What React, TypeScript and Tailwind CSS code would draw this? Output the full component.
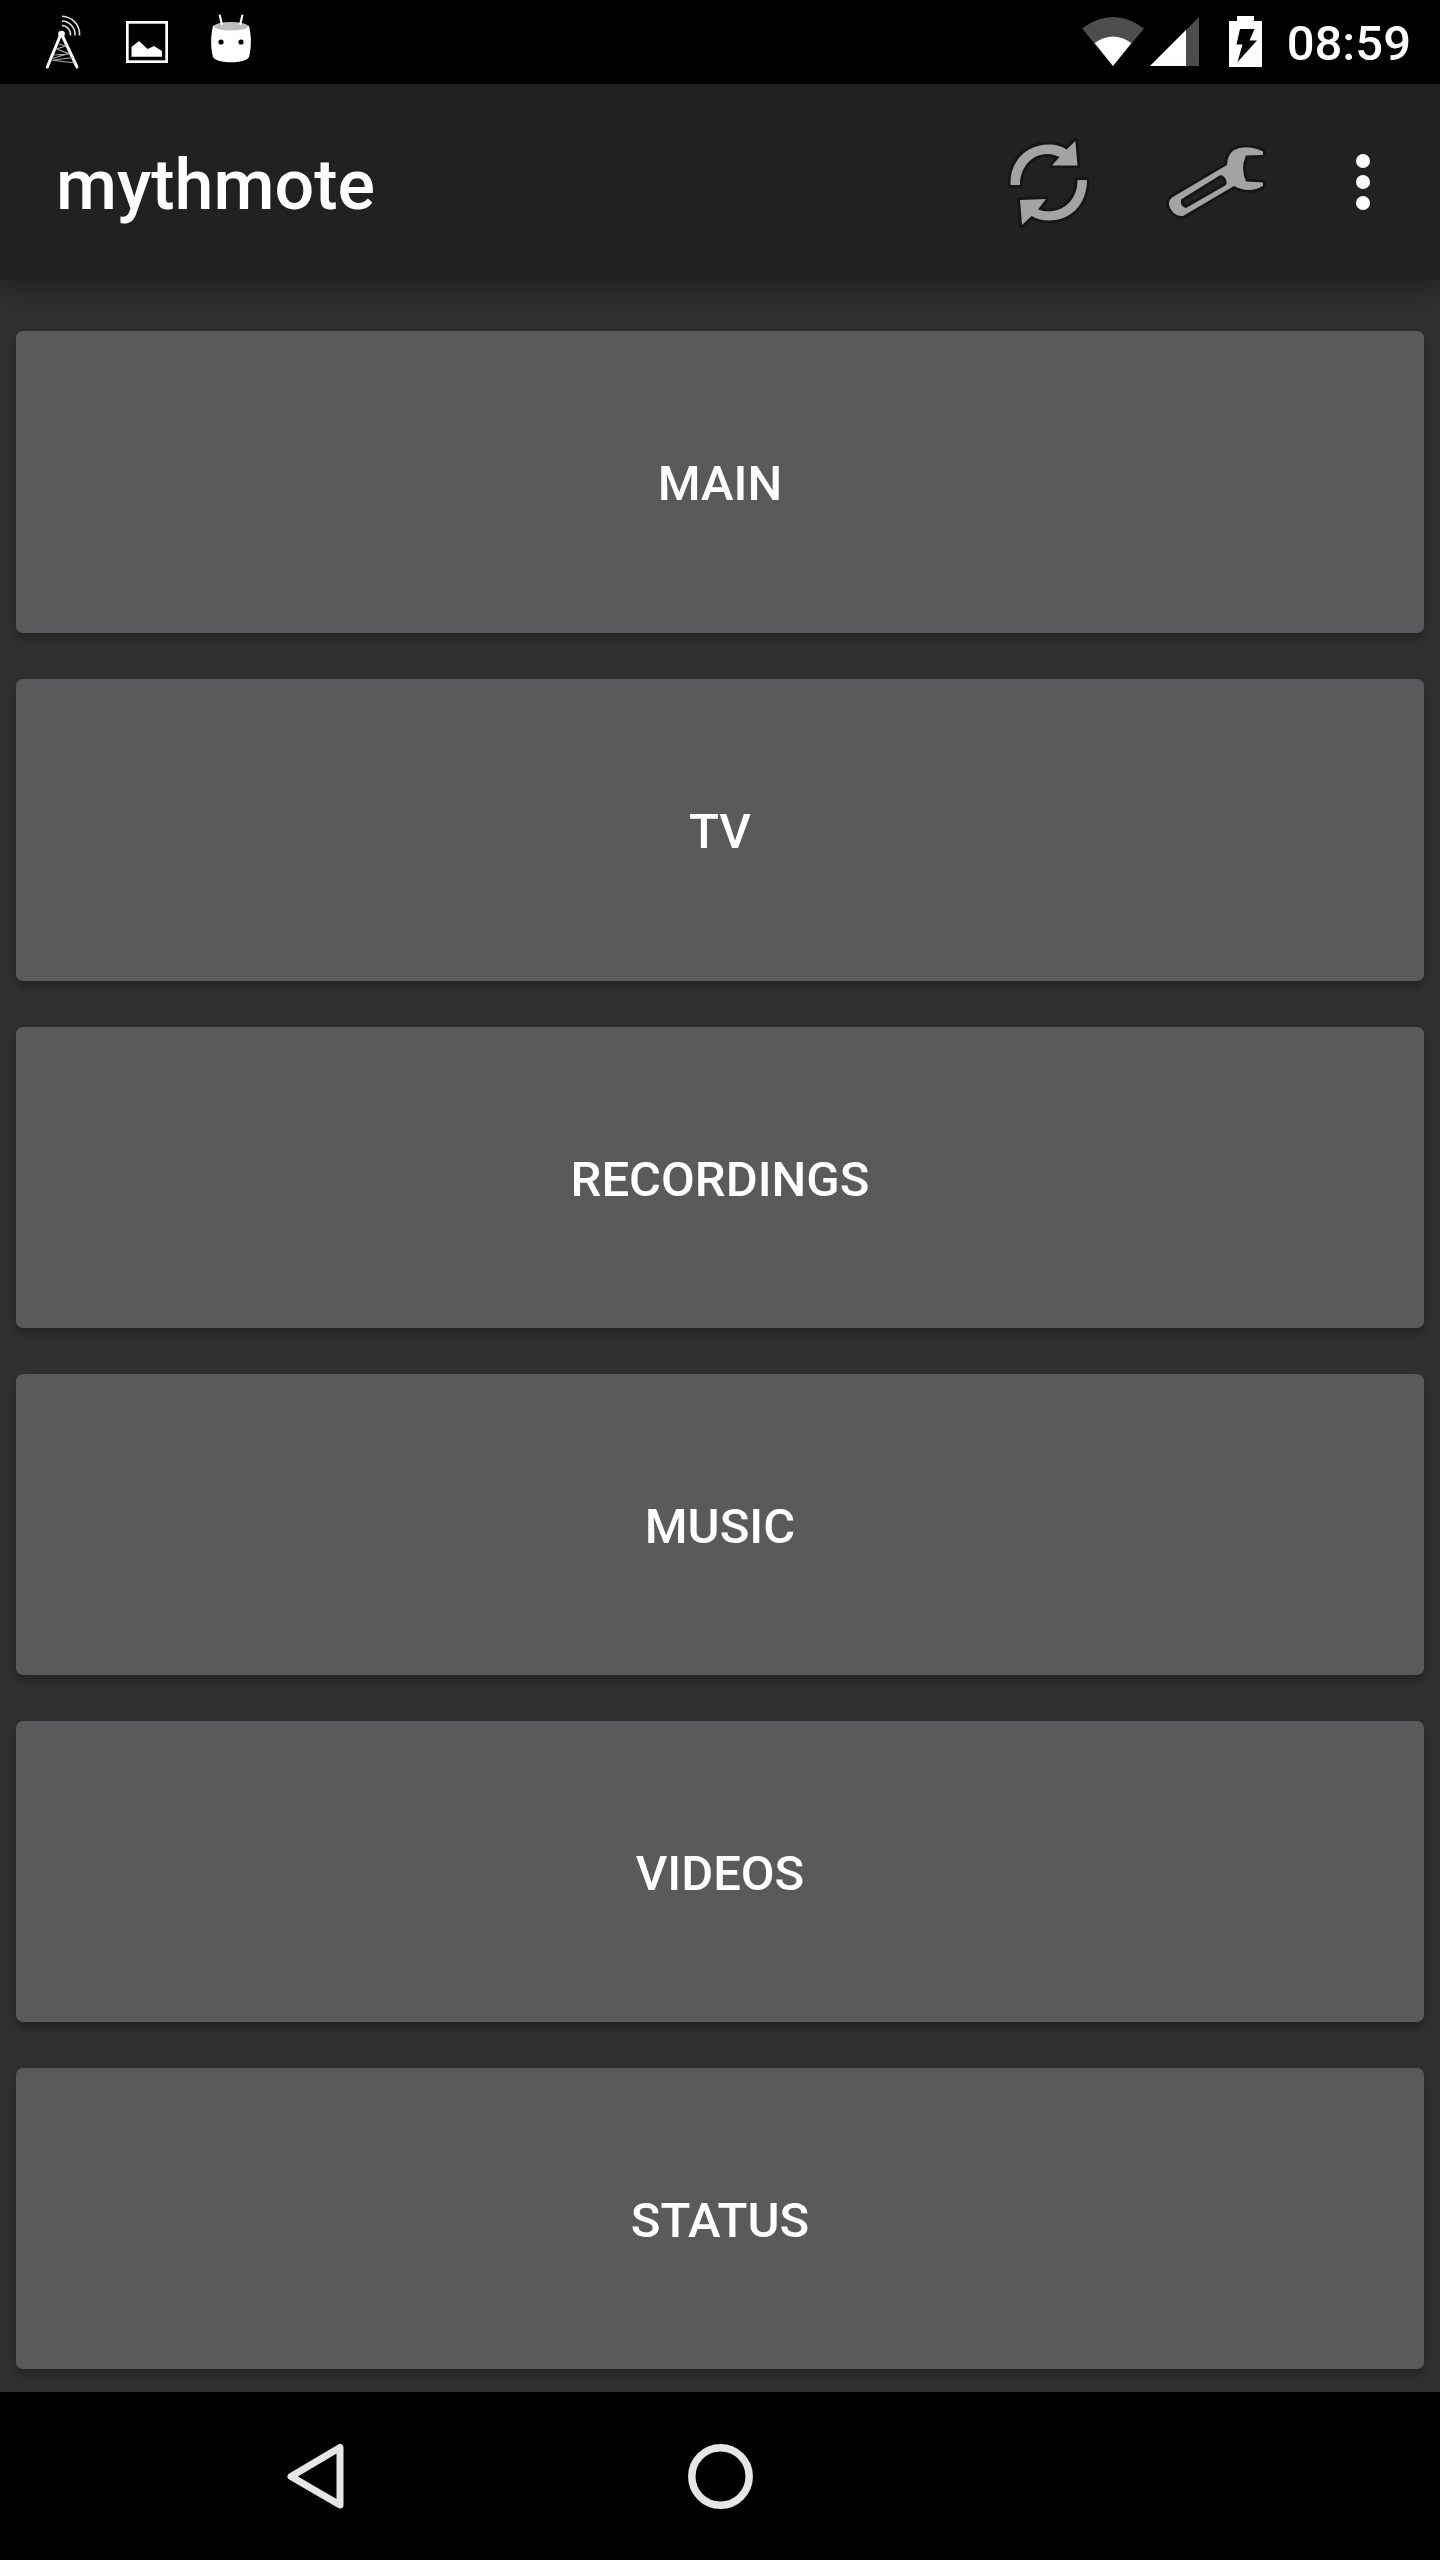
const items = [
  { label: 'MAIN', cls: 'h-[302px] mb-[46px]' },
  { label: 'TV', cls: 'h-[302px] mb-[46px]' },
  { label: 'RECORDINGS', cls: 'h-[301px] mb-[46px]' },
  { label: 'MUSIC', cls: 'h-[301px] mb-[46px]' },
  { label: 'VIDEOS', cls: 'h-[301px] mb-[46px]' },
  { label: 'STATUS', cls: 'h-[301px]' },
];

function TowerIcon() {
  return (
    <svg className="ml-[44px] h-[60px] w-[40px]" viewBox="44 12 40 60" fill="none" stroke="#fff">
      <path d="M61 34 47.3 67M61.5 34 77 67" strokeWidth="3" strokeLinecap="round" />
      <circle cx="61.5" cy="34" r="3.3" fill="#fff" stroke="none" />
      <path d="M59 44 65.500 46 56.500 49 68.500 53.500 52.500 58.500M54 55 70 54M51 60.500 73 57.500M51 60 75 63" strokeWidth="1.200" stroke="#a8a8a8" />
      <g strokeWidth="1.6" stroke="#ddd">
        <path d="M62 25.500a9 9 0 0 1 8.500 10M62 21a13.500 13.500 0 0 1 13 14.500M62 16.200a18 18 0 0 1 17.500 19.300" />
      </g>
    </svg>
  );
}

function PictureIcon() {
  return (
    <svg className="ml-[42px] h-[42px] w-[42px]" viewBox="126 21 42 42">
      <rect x="127.300" y="22.300" width="39.400" height="39.400" fill="none" stroke="#fff" strokeWidth="2.800" />
      <path d="M131.500 56.700V47l7.500-6 8.500 8 6.500-3 8 5v5.700z" fill="#fff" />
    </svg>
  );
}

function DroidIcon() {
  return (
    <svg className="ml-[42px] h-[58px] w-[42px]" viewBox="210 13 42 58">
      <path d="M213 26c1-2 34-2 36 0 2.500 10 2.500 22 0 31-3 7-33 7-36 0-2.500-9-2.500-21 0-31z" fill="#fff" />
      <ellipse cx="231" cy="26.300" rx="17" ry="4.300" fill="#bdbdbd" />
      <path d="M219.800 15.500l2 8.500M242.300 15.500l-2 8.500" stroke="#fff" strokeWidth="2.200" strokeLinecap="round" />
      <circle cx="221" cy="42" r="2.600" />
      <circle cx="241" cy="42" r="2.600" />
    </svg>
  );
}

function StatusIcons() {
  return (
    <svg className="ml-auto h-[60px] w-[190px]" viewBox="1080 12 190 60">
      <path d="M1082 28.500Q1112.800 5.500 1144 28.500L1113 66z" fill="#4d4d4d" />
      <path d="M1094.600 43Q1113 30 1131.400 43L1113 66z" fill="#fff" />
      <path d="M1150 66 1199 17V66z" fill="#4d4d4d" />
      <path d="M1150 66 1186 30V66z" fill="#fff" />
      <path d="M1237 16h17v5h8v46h-33V21h8z" fill="#fff" />
      <path d="M1240 29h14.500l-5 11.500h7.500L1237.500 62l5-17.500h-6z" fill="#000" />
    </svg>
  );
}

function RefreshIcon() {
  return (
    <svg className="ml-auto h-[120px] w-[120px]" viewBox="0 2 120 120">
      <g fill="#a3a3a3" stroke="#151515" strokeWidth="5.500" strokeLinejoin="round" paintOrder="stroke">
        <path d="M20.700 65C19 42 36 24.500 59 24.500c7 0 12.500 1.700 17.700 5L85.300 21l2.200 24.500H62l7.500-8.500C52 28 30 40 30 65z" />
        <path d="M97 60c0 23-15 40.500-38 40.500-6.500 0-12-1.500-17.500-4.500L32 105 30 80l26-1-8 10.500C66 96 87.500 85 87.500 60z" />
      </g>
    </svg>
  );
}

function WrenchIcon() {
  return (
    <svg className="ml-[40px] h-[120px] w-[130px]" viewBox="0 2 130 120">
      <path
        d="M113 31.500 Q96 24 84 30 Q77 35 77 45 L22 77.500 Q17 82 20 88 Q25 97 33 96 L84 66 Q99 74 113 66V62.500L96 61.500Q90 48 96 35.500L113 35z M73 56 Q78 60 76 65L36 88Q30 87 31 79.500L68 56.500Q71 54.500 73 56z"
        fill="#a3a3a3" fillRule="evenodd" stroke="#151515" strokeWidth="5.500" strokeLinejoin="round" paintOrder="stroke"
      />
    </svg>
  );
}

function OverflowIcon() {
  return (
    <svg className="mr-[56px] ml-[54px] h-[56px] w-[50px]" viewBox="0 0 50 56" fill="#fff">
      <circle cx="29" cy="7" r="7" />
      <circle cx="29" cy="28" r="7" />
      <circle cx="29" cy="49" r="7" />
    </svg>
  );
}

export default function App() {
  return (
    <div className="flex h-[2560px] w-[1440px] flex-col overflow-hidden bg-[#303030] font-['Roboto',sans-serif] font-medium text-white">
      <div className="flex h-[84px] shrink-0 items-center bg-black">
        <TowerIcon />
        <PictureIcon />
        <DroidIcon />
        <StatusIcons />
        <span className="mr-[29px] ml-[17px] pt-[3px] text-[49px] leading-[84px]">08:59</span>
      </div>
      <header className="z-10 flex h-[196px] shrink-0 items-center bg-[#212121] shadow-[0_6px_28px_rgba(0,0,0,0.4)]">
        <h1 className="ml-[56px] pt-[6px] text-[70px] leading-none">mythmote</h1>
        <RefreshIcon />
        <WrenchIcon />
        <OverflowIcon />
      </header>
      <main className="flex flex-1 flex-col px-4 pt-[51px]">
        {items.map((item) => (
          <button
            key={item.label}
            className={`${item.cls} shrink-0 rounded-[7px] bg-[#5a5a5c] pt-[3px] text-[49px] leading-none shadow-[0_5px_10px_rgba(0,0,0,0.3)]`}
          >
            {item.label}
          </button>
        ))}
      </main>
      <nav className="z-10 flex h-[168px] shrink-0 items-center bg-black">
        <svg className="ml-[284px] h-[72px] w-[64px]" viewBox="284 2440 64 72" fill="none" stroke="#e6e6e6" strokeWidth="7" strokeLinejoin="round">
          <path d="M340 2447.500v57.500L291 2476.500z" />
        </svg>
        <svg className="ml-[336px] h-[72px] w-[72px]" viewBox="0 0 72 72" fill="none" stroke="#e6e6e6" strokeWidth="7.500">
          <circle cx="36.500" cy="36.500" r="28.700" />
        </svg>
      </nav>
    </div>
  );
}
